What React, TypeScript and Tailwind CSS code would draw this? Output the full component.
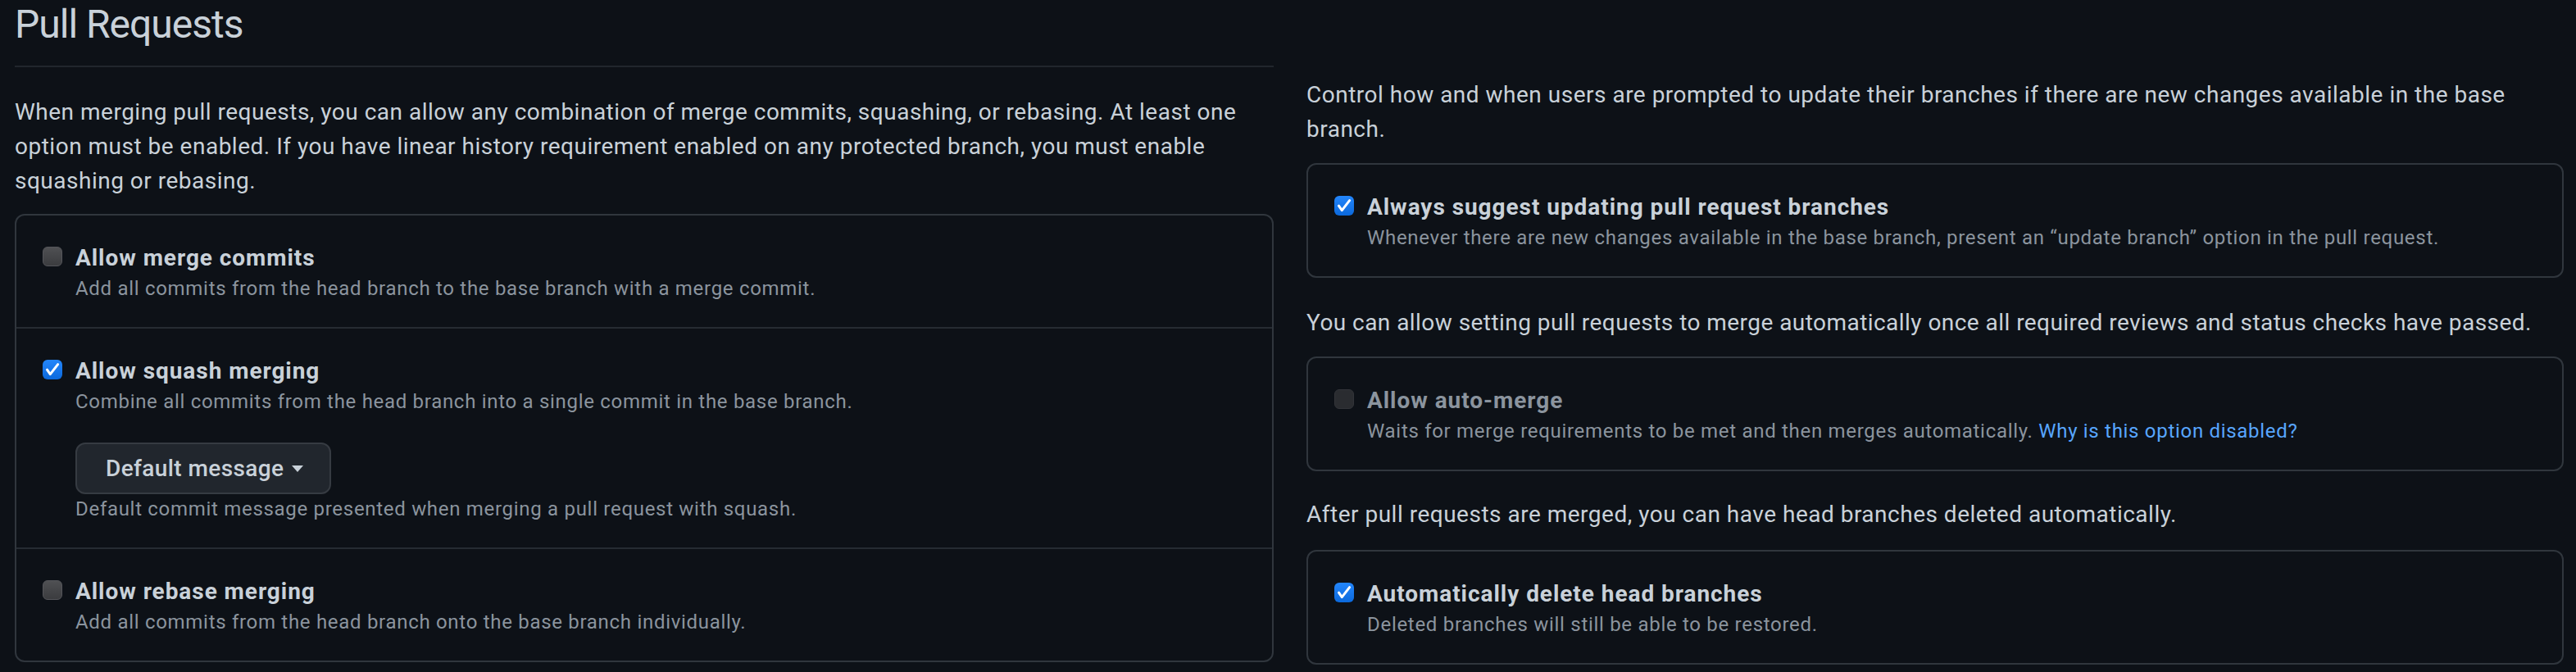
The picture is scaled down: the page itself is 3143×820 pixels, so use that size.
import React from "react";

type CheckState = "on" | "off" | "disabled";

function Check({ state }: { state: CheckState }) {
  if (state === "on") {
    return (
      <div className="w-[24px] h-[24px] rounded-[6px] bg-gradient-to-b from-[#2386fb] to-[#0b69dc] flex items-center justify-center">
        <svg width="24" height="24" viewBox="0 0 24 24" fill="none">
          <path d="M5.5 12.2 L9.3 17.6 L18.6 5.6" stroke="#ffffff" strokeWidth="3" strokeLinecap="round" strokeLinejoin="round" />
        </svg>
      </div>
    );
  }
  if (state === "disabled") {
    return <div className="w-[24px] h-[24px] rounded-[6px] bg-[#2a2c30] border border-[#323439]" />;
  }
  return <div className="w-[24px] h-[24px] rounded-[6px] bg-gradient-to-b from-[#4f5053] to-[#3b3c3f] border border-[#54555a]" />;
}

function Row({
  state,
  label,
  desc,
  first,
  children,
}: {
  state: CheckState;
  label: string;
  desc: React.ReactNode;
  first?: boolean;
  children?: React.ReactNode;
}) {
  return (
    <div className={`flex gap-[16px] px-[32px] pt-[31px] pb-[29px] ${first ? "" : "border-t-2 border-[#262b32]"}`}>
      <div className="pt-[7px] shrink-0">
        <Check state={state} />
      </div>
      <div className="flex flex-col">
        <div
          className={`text-[28px] leading-[42px] font-bold tracking-[0.95px] ${
            state === "disabled" ? "text-[#8b949e]" : "text-[#c9d1d9]"
          }`}
        >
          {label}
        </div>
        <div className="text-[24px] leading-[36px] -mt-[2px] tracking-[0.7px] text-[#8b949e]">{desc}</div>
        {children}
      </div>
    </div>
  );
}

export default function App() {
  return (
    <div className="min-h-[820px] w-[3143px] bg-[#0d1117] flex gap-[40px] pl-[18px] pr-[15px] font-['Roboto',sans-serif] text-[#c9d1d9]">
      {/* Left column */}
      <div className="w-[1536px] shrink-0 flex flex-col">
        <h2 className="pt-[2px] pb-[22px] border-b-2 border-[#21262d] text-[48px] leading-[56px] font-normal tracking-[-1px] text-[#c9d1d9]">
          Pull Requests
        </h2>
        <p className="mt-[34px] text-[28px] leading-[42px] tracking-[0.5px] whitespace-nowrap">
          When merging pull requests, you can allow any combination of merge commits, squashing, or rebasing. At least one
          <br />
          option must be enabled. If you have linear history requirement enabled on any protected branch, you must enable
          <br />
          squashing or rebasing.
        </p>
        <div className="mt-[19px] border-2 border-[#30363d] rounded-[12px]">
          <Row
            first
            state="off"
            label="Allow merge commits"
            desc="Add all commits from the head branch to the base branch with a merge commit."
          />
          <Row
            state="on"
            label="Allow squash merging"
            desc="Combine all commits from the head branch into a single commit in the base branch."
          >
            <button className="mt-[32px] w-[312px] h-[63px] flex items-center gap-[10px] pl-[35px] bg-[#21262d] border-2 border-[#363b42] rounded-[12px] text-[28px] font-medium tracking-[0.4px] text-[#c9d1d9]">
              <span>Default message</span>
              <svg width="14" height="8" viewBox="0 0 14 8">
                <path d="M0 0 L14 0 L7 8 Z" fill="#c9d1d9" />
              </svg>
            </button>
            <div className="text-[24px] leading-[36px] tracking-[0.7px] text-[#8b949e]">
              Default commit message presented when merging a pull request with squash.
            </div>
          </Row>
          <Row
            state="off"
            label="Allow rebase merging"
            desc="Add all commits from the head branch onto the base branch individually."
          />
        </div>
      </div>

      {/* Right column */}
      <div className="w-[1534px] shrink-0 flex flex-col pt-[95px]">
        <p className="text-[28px] leading-[42px] tracking-[0.5px] whitespace-nowrap">
          Control how and when users are prompted to update their branches if there are new changes available in the base
          <br />
          branch.
        </p>
        <div className="mt-[20px] border-2 border-[#30363d] rounded-[12px]">
          <Row
            first
            state="on"
            label="Always suggest updating pull request branches"
            desc="Whenever there are new changes available in the base branch, present an “update branch” option in the pull request."
          />
        </div>
        <p className="mt-[34px] text-[28px] leading-[42px] tracking-[0.45px] whitespace-nowrap">
          You can allow setting pull requests to merge automatically once all required reviews and status checks have passed.
        </p>
        <div className="mt-[20px] border-2 border-[#30363d] rounded-[12px]">
          <Row
            first
            state="disabled"
            label="Allow auto-merge"
            desc={
              <>
                Waits for merge requirements to be met and then merges automatically.{" "}
                <span className="text-[#58a6ff]">Why is this option disabled?</span>
              </>
            }
          />
        </div>
        <p className="mt-[32px] text-[28px] leading-[42px] tracking-[0.5px] whitespace-nowrap">
          After pull requests are merged, you can have head branches deleted automatically.
        </p>
        <div className="mt-[22px] border-2 border-[#30363d] rounded-[12px]">
          <Row
            first
            state="on"
            label="Automatically delete head branches"
            desc="Deleted branches will still be able to be restored."
          />
        </div>
      </div>
    </div>
  );
}
